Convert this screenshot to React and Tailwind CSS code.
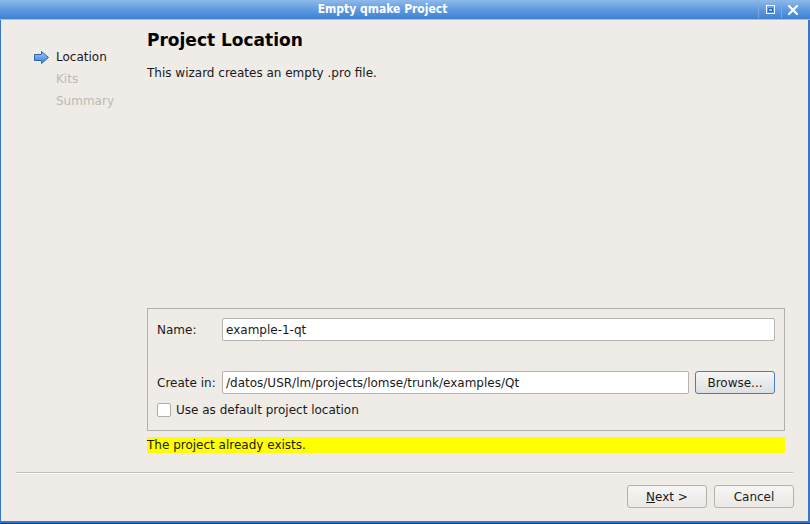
import React from "react";

const font = { fontFamily: '"DejaVu Sans", "Liberation Sans", sans-serif' };

function Arrow() {
  return (
    <svg width="17" height="15" viewBox="0 0 17 15">
      <defs>
        <linearGradient id="ag" x1="0" y1="0" x2="0" y2="1">
          <stop offset="0" stopColor="#a9cdf5" />
          <stop offset="0.5" stopColor="#6aa5e8" />
          <stop offset="1" stopColor="#3b7fd0" />
        </linearGradient>
      </defs>
      <path d="M1.5 4.5 H8.5 V1.5 L15.5 7.5 L8.5 13.5 V10.5 H1.5 Z" fill="url(#ag)" stroke="#2f64a8" strokeWidth="1" strokeLinejoin="round" />
    </svg>
  );
}

export default function App() {
  return (
    <div
      className="w-[810px] h-[524px] flex flex-col bg-[#3a76c6] border-b border-b-[#1d3a60] pl-[1px] pr-[2px] pb-[2px] overflow-hidden text-[12px] text-[#1a1a1a]"
      style={font}
    >
      {/* Title bar */}
      <div className="h-[20px] shrink-0 flex items-center bg-gradient-to-b from-[#8fbaea] via-[#5f9ae0] to-[#3f80d2] border-b border-[#9dbfe6] relative -ml-[1px] -mr-[2px]">
        <div
          className="flex-1 pr-[45px] text-center text-white font-bold text-[12px] leading-[19px]"
          style={{ fontFamily: '"DejaVu Sans Condensed", "DejaVu Sans", sans-serif', fontStretch: "condensed" }}
        >
          Empty qmake Project
        </div>
        <div className="absolute right-[12px] top-0 h-[19px] flex items-center">
          <div className="w-[1px] h-[17px] bg-[#7aa7dc] mr-[7px]" />
          <div className="w-[9px] h-[9px] border border-white flex items-center justify-center mr-[6px]">
            <div className="w-[5px] h-[4px] border border-[#2e66b0] bg-[#9cc0ea]" />
          </div>
          <div className="w-[1px] h-[17px] bg-[#7aa7dc] mr-[6px]" />
          <svg width="10" height="10" viewBox="0 0 10 10">
            <path d="M1 1 L9 9 M9 1 L1 9" stroke="white" strokeWidth="2.2" strokeLinecap="square" />
          </svg>
        </div>
      </div>

      {/* Content */}
      <div className="flex-1 flex flex-col bg-[#efebe7]">
        <div className="h-[439px] flex">
          {/* Sidebar */}
          <div className="w-[146px] shrink-0 pt-[26px] pl-[32px] flex flex-col">
            <div className="h-[22px] flex items-center gap-[6px]">
              <Arrow />
              <span className="text-[#1a1a1a]">Location</span>
            </div>
            <div className="h-[22px] flex items-center pl-[23px] text-[#bdb9b5]">Kits</div>
            <div className="h-[22px] flex items-center pl-[23px] text-[#bdb9b5]">Summary</div>
          </div>

          {/* Main */}
          <div className="flex-1 flex flex-col pr-[23px] pt-[10px] pb-[6px]">
            <div className="text-[17px] font-bold leading-[21px] text-black">Project Location</div>
            <div className="mt-[15px] leading-[15px]">This wizard creates an empty .pro file.</div>
            <div className="flex-1" />
            <div className="h-[123px] border border-[#b3afaa] pl-[9px] pr-[9px] pt-[9px] flex flex-col">
              <div className="flex items-center h-[23px]">
                <div className="w-[65px]">Name:</div>
                <div className="flex-1 h-[23px] bg-white border border-[#b7b3ae] rounded-[2px] flex items-center pl-[3px]">
                  example-1-qt
                </div>
              </div>
              <div className="flex items-center h-[23px] mt-[30px]">
                <div className="w-[65px]">Create in:</div>
                <div className="flex-1 h-[23px] bg-white border border-[#b7b3ae] rounded-[2px] flex items-center pl-[3px]">
                  /datos/USR/lm/projects/lomse/trunk/examples/Qt
                </div>
                <div className="ml-[6px] w-[80px] h-[23px] rounded-[3px] border border-[#4a7fb5] bg-gradient-to-b from-[#f6f6f5] to-[#dcdfe2] flex items-center justify-center">
                  Browse...
                </div>
              </div>
              <div className="flex items-center h-[14px] mt-[9px]">
                <div className="w-[14px] h-[14px] bg-white border border-[#b0aca7] rounded-[2px]" />
                <span className="ml-[5px]">Use as default project location</span>
              </div>
            </div>
            <div className="mt-[6px] h-[16px] bg-[#ffff00] leading-[16px] text-[#1a1a1a]">
              The project already exists.
            </div>
          </div>
        </div>

        {/* Separator */}
        <div className="mt-[13px] mx-[15px] h-[1px] bg-[#c3bfba] border-b border-white box-content" />

        {/* Buttons */}
        <div className="mt-[11px] flex justify-end gap-[7px] pr-[14px]">
          <div className="w-[80px] h-[23px] rounded-[3px] border border-[#b5b1ac] bg-gradient-to-b from-[#f7f6f5] to-[#ebe8e5] flex items-center justify-center">
            <span><span className="underline">N</span>ext &gt;</span>
          </div>
          <div className="w-[80px] h-[23px] rounded-[3px] border border-[#b5b1ac] bg-gradient-to-b from-[#f7f6f5] to-[#ebe8e5] flex items-center justify-center">
            Cancel
          </div>
        </div>
      </div>
    </div>
  );
}
